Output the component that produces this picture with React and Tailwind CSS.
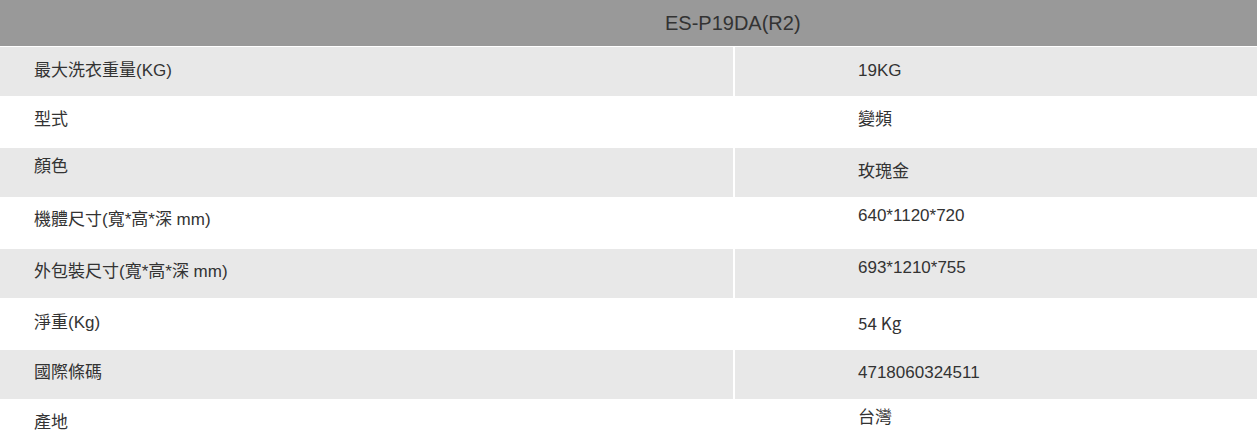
import React from 'react';

// spec rows: label, value, row height, and top offsets for each cell text
const rows = [
  { label: '最大洗衣重量(KG)', value: '19KG', h: 'h-[49px]', gray: true, lt: 'pt-[12px]', rt: 'pt-[12px]' },
  { label: '型式', value: '變頻', h: 'h-[52px]', gray: false, lt: 'pt-[12px]', rt: 'pt-[12px]' },
  { label: '顏色', value: '玫瑰金', h: 'h-[49px]', gray: true, lt: 'pt-[7px]', rt: 'pt-[12px]' },
  { label: '機體尺寸(寬*高*深 mm)', value: '640*1120*720', h: 'h-[52px]', gray: false, lt: 'pt-[11px]', rt: 'pt-[7px]' },
  { label: '外包裝尺寸(寬*高*深 mm)', value: '693*1210*755', h: 'h-[49px]', gray: true, lt: 'pt-[11px]', rt: 'pt-[7px]' },
  { label: '淨重(Kg)', value: '54 Kg', h: 'h-[52px]', gray: false, lt: 'pt-[13px]', rt: 'pt-[13px]', alt: true },
  { label: '國際條碼', value: '4718060324511', h: 'h-[49px]', gray: true, lt: 'pt-[11px]', rt: 'pt-[11px]' },
  { label: '產地', value: '台灣', h: 'h-[52px]', gray: false, lt: 'pt-[12px]', rt: 'pt-[7px]' },
];

export default function App() {
  return (
    <div
      className="w-full min-h-screen bg-white text-[#333333] overflow-hidden"
      style={{ fontFamily: '"Liberation Sans", "Noto Sans CJK TC", sans-serif' }}
    >
      {/* Header */}
      <div className="h-[46px] bg-[#999999] flex items-center pl-[665px] text-[20px] leading-[24px] text-[#333333]">
        ES-P19DA(R2)
      </div>

      {/* Spec table */}
      <div className="mt-[1px] grid grid-cols-[733px_1fr] gap-x-[2px]">
        {rows.map((r) => (
          <React.Fragment key={r.label}>
            <div className={`${r.h} ${r.lt} ${r.gray ? 'bg-[#e8e8e8]' : 'bg-white'} pl-[34px] text-[17px] leading-[24px]`}>
              {r.label}
            </div>
            <div
              className={`${r.h} ${r.rt} ${r.gray ? 'bg-[#e8e8e8]' : 'bg-white'} pl-[123px] text-[17px] leading-[24px]`}
              style={r.alt ? { fontFamily: '"Noto Sans CJK TC", sans-serif' } : undefined}
            >
              {r.value}
            </div>
          </React.Fragment>
        ))}
      </div>
    </div>
  );
}
